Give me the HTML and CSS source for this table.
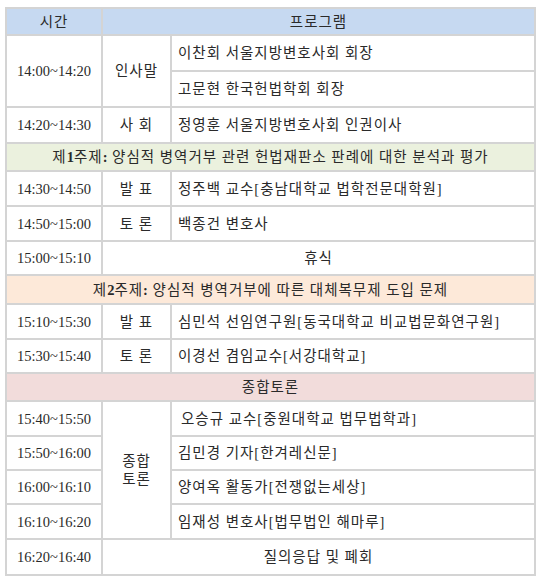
FILE: index.html
```html
<!DOCTYPE html>
<html lang="ko">
<head>
<meta charset="utf-8">
<title>프로그램</title>
<link rel="stylesheet" href="styles.css">
</head>
<body>
<table class="program">
  <colgroup>
    <col class="c-time">
    <col class="c-role">
    <col class="c-desc">
  </colgroup>
  <tr class="head h27">
    <td>시간</td>
    <td colspan="2">프로그램</td>
  </tr>
  <tr class="h36">
    <td rowspan="2" class="time">14:00~14:20</td>
    <td rowspan="2" class="role">인사말</td>
    <td class="desc">이찬회 서울지방변호사회 회장</td>
  </tr>
  <tr class="h36">
    <td class="desc">고문현 한국헌법학회 회장</td>
  </tr>
  <tr class="h36">
    <td class="time">14:20~14:30</td>
    <td class="role">사 회</td>
    <td class="desc">정영훈 서울지방변호사회 인권이사</td>
  </tr>
  <tr class="section green h28">
    <td colspan="3">제<b>1</b>주제<b>:</b> 양심적 병역거부 관련 헌법재판소 판례에 대한 분석과 평가</td>
  </tr>
  <tr class="h35">
    <td class="time">14:30~14:50</td>
    <td class="role">발 표</td>
    <td class="desc">정주백 교수[충남대학교 법학전문대학원]</td>
  </tr>
  <tr class="h35">
    <td class="time">14:50~15:00</td>
    <td class="role">토 론</td>
    <td class="desc">백종건 변호사</td>
  </tr>
  <tr class="h34">
    <td class="time">15:00~15:10</td>
    <td colspan="2" class="center">휴식</td>
  </tr>
  <tr class="section orange h29">
    <td colspan="3">제<b>2</b>주제<b>:</b> 양심적 병역거부에 따른 대체복무제 도입 문제</td>
  </tr>
  <tr class="h35">
    <td class="time">15:10~15:30</td>
    <td class="role">발 표</td>
    <td class="desc">심민석 선임연구원[동국대학교 비교법문화연구원]</td>
  </tr>
  <tr class="h34">
    <td class="time">15:30~15:40</td>
    <td class="role">토 론</td>
    <td class="desc">이경선 겸임교수[서강대학교]</td>
  </tr>
  <tr class="section pink h28">
    <td colspan="3">종합토론</td>
  </tr>
  <tr class="h35">
    <td class="time">15:40~15:50</td>
    <td rowspan="4" class="role">종합<br>토론</td>
    <td class="desc indent">오승규 교수[중원대학교 법무법학과]</td>
  </tr>
  <tr class="h34">
    <td class="time">15:50~16:00</td>
    <td class="desc">김민경 기자[한겨레신문]</td>
  </tr>
  <tr class="h34">
    <td class="time">16:00~16:10</td>
    <td class="desc">양여옥 활동가[전쟁없는세상]</td>
  </tr>
  <tr class="h35">
    <td class="time">16:10~16:20</td>
    <td class="desc">임재성 변호사[법무법인 해마루]</td>
  </tr>
  <tr class="h36">
    <td class="time">16:20~16:40</td>
    <td colspan="2" class="center">질의응답 및 폐회</td>
  </tr>
</table>
</body>
</html>
```

FILE: styles.css
```css
html, body {
  margin: 0;
  padding: 0;
  background: #ffffff;
}

body {
  padding: 7px 0 0 5px;
  font-family: "Liberation Serif", "Noto Sans CJK KR", serif;
  font-size: 14.5px;
  color: #2a2a2a;
}

.program {
  border-collapse: collapse;
  table-layout: fixed;
  width: 529px;
}

.c-time { width: 96px; }
.c-role { width: 69px; }
.c-desc { width: 364px; }

.program td {
  border: 2px solid #d4d4d4;
  padding: 0;
  line-height: 18px;
  vertical-align: middle;
  text-align: center;
  white-space: nowrap;
  letter-spacing: 1px;
}

.program td.time {
  letter-spacing: 0;
}

.program td.desc {
  text-align: left;
  padding-left: 6px;
}

.program td.desc.indent {
  padding-left: 9px;
}

.program b {
  font-weight: bold;
  letter-spacing: 0;
}

.head td { background: #c6d9f1; }
.green td { background: #ebf1de; }
.orange td { background: #fde9d9; }
.pink td { background: #f2dcdb; }

.h27 { height: 27px; }
.h28 { height: 28px; }
.h29 { height: 29px; }
.h34 { height: 34px; }
.h35 { height: 35px; }
.h36 { height: 36px; }
```
